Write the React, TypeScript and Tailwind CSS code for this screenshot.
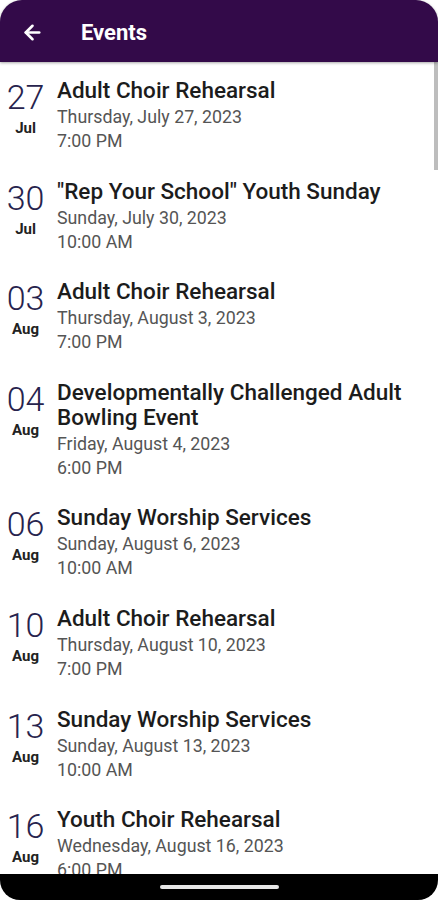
import { ArrowLeft } from 'lucide-react';

type EventItem = {
  day: string;
  month: string;
  title: string;
  date: string;
  time: string;
};

const EVENTS: EventItem[] = [
  { day: '27', month: 'Jul', title: 'Adult Choir Rehearsal', date: 'Thursday, July 27, 2023', time: '7:00 PM' },
  { day: '30', month: 'Jul', title: '"Rep Your School" Youth Sunday', date: 'Sunday, July 30, 2023', time: '10:00 AM' },
  { day: '03', month: 'Aug', title: 'Adult Choir Rehearsal', date: 'Thursday, August 3, 2023', time: '7:00 PM' },
  { day: '04', month: 'Aug', title: 'Developmentally Challenged Adult Bowling Event', date: 'Friday, August 4, 2023', time: '6:00 PM' },
  { day: '06', month: 'Aug', title: 'Sunday Worship Services', date: 'Sunday, August 6, 2023', time: '10:00 AM' },
  { day: '10', month: 'Aug', title: 'Adult Choir Rehearsal', date: 'Thursday, August 10, 2023', time: '7:00 PM' },
  { day: '13', month: 'Aug', title: 'Sunday Worship Services', date: 'Sunday, August 13, 2023', time: '10:00 AM' },
  { day: '16', month: 'Aug', title: 'Youth Choir Rehearsal', date: 'Wednesday, August 16, 2023', time: '6:00 PM' },
];

function EventRow({ ev }: { ev: EventItem }) {
  return (
    <div className="flex pt-[16px] pb-[9.6px] pr-6">
      {/* date block */}
      <div className="flex w-[51px] shrink-0 flex-col items-center">
        <span className="mt-[1px] text-[34px] leading-[36px] font-light text-[#27234d]">{ev.day}</span>
        <span className="mt-[3px] text-[15px] leading-5 font-bold text-[#222]">{ev.month}</span>
      </div>
      <div className="ml-[6px] min-w-0 flex-1">
        <h3 className="text-[22.5px] leading-[25px] font-medium text-[#1c1c1c]">{ev.title}</h3>
        <p className="mt-[2px] text-[17.8px] leading-6 text-[#555]">{ev.date}</p>
        <p className="text-[17.8px] leading-6 text-[#555]">{ev.time}</p>
      </div>
    </div>
  );
}

export default function App() {
  return (
    <div
      className="relative flex h-[900px] w-[438px] flex-col overflow-hidden bg-white"
      style={{ fontFamily: 'Roboto, "Noto Sans", sans-serif' }}
    >
      <header className="z-10 flex h-[62px] shrink-0 items-center rounded-t-[22px] bg-[#330a49] pt-[3px] shadow-[0_1px_3px_rgba(0,0,0,0.35)]">
        <button type="button" aria-label="Back" className="ml-[20px] flex h-6 w-6 items-center justify-center text-white">
          <ArrowLeft size={23} strokeWidth={2.75} />
        </button>
        <h1 className="ml-[37px] text-[22px] font-bold text-white">Events</h1>
      </header>

      <main className="relative min-h-0 flex-1 overflow-hidden">
        {EVENTS.map((ev, i) => (
          <EventRow key={i} ev={ev} />
        ))}
        {/* scrollbar thumb */}
        <div className="absolute right-0 top-0 h-[108px] w-[4px] bg-[#bdbdbd]" />
      </main>

      {/* system nav bar */}
      <div className="flex h-[26px] shrink-0 items-center justify-center rounded-b-[20px] bg-black">
        <div className="h-[4px] w-[119px] rounded-full bg-[#e6e6e6]" />
      </div>
    </div>
  );
}
